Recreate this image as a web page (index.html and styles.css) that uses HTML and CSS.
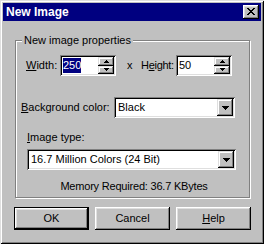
FILE: index.html
```html
<!DOCTYPE html>
<html lang="en">
<head>
    <meta charset="UTF-8">
    <title>New Image</title>
    <link rel="stylesheet" href="styles.css">
</head>
<body>
    <div class="dialog">
        <div class="title-bar">
            <span class="title">New Image</span>
            <button class="close-btn" aria-label="Close">
                <svg width="8" height="7" viewBox="0 0 8 7" shape-rendering="crispEdges"><path d="M0 0h2v1H0zM6 0h2v1H6zM1 1h2v1H1zM5 1h2v1H5zM2 2h4v1H2zM3 3h2v1H3zM2 4h4v1H2zM1 5h2v1H1zM5 5h2v1H5zM0 6h2v1H0zM6 6h2v1H6z" fill="#000"/></svg>
            </button>
        </div>

        <fieldset class="group">
            <legend>New image properties</legend>

            <div class="size-row">
                <label class="lbl-width"><u>W</u>idth:</label>
                <div class="spin-edit">
                    <span class="edit-text"><span class="selected">250</span></span>
                    <div class="spin">
                        <span class="spin-btn"><svg width="5" height="3" viewBox="0 0 5 3" shape-rendering="crispEdges"><path d="M2 0h1v1H2zM1 1h3v1H1zM0 2h5v1H0z"/></svg></span>
                        <span class="spin-btn"><svg width="5" height="3" viewBox="0 0 5 3" shape-rendering="crispEdges"><path d="M0 0h5v1H0zM1 1h3v1H1zM2 2h1v1H2z"/></svg></span>
                    </div>
                </div>
                <span class="times">x</span>
                <label class="lbl-height">H<u>e</u>ight:</label>
                <div class="spin-edit">
                    <span class="edit-text">50</span>
                    <div class="spin">
                        <span class="spin-btn"><svg width="5" height="3" viewBox="0 0 5 3" shape-rendering="crispEdges"><path d="M2 0h1v1H2zM1 1h3v1H1zM0 2h5v1H0z"/></svg></span>
                        <span class="spin-btn"><svg width="5" height="3" viewBox="0 0 5 3" shape-rendering="crispEdges"><path d="M0 0h5v1H0zM1 1h3v1H1zM2 2h1v1H2z"/></svg></span>
                    </div>
                </div>
            </div>

            <div class="bg-row">
                <label class="lbl-bg"><u>B</u>ackground color:</label>
                <div class="combo combo-bg">
                    <span class="combo-text">Black</span>
                    <span class="drop-btn"><svg width="7" height="4" viewBox="0 0 7 4" shape-rendering="crispEdges"><path d="M0 0h7v1H0zM1 1h5v1H1zM2 2h3v1H2zM3 3h1v1H3z"/></svg></span>
                </div>
            </div>

            <label class="lbl-type"><u>I</u>mage type:</label>
            <div class="combo combo-type">
                <span class="combo-text">16.7 Million Colors (24 Bit)</span>
                <span class="drop-btn"><svg width="7" height="4" viewBox="0 0 7 4" shape-rendering="crispEdges"><path d="M0 0h7v1H0zM1 1h5v1H1zM2 2h3v1H2zM3 3h1v1H3z"/></svg></span>
            </div>

            <p class="memory">Memory Required: 36.7 KBytes</p>
        </fieldset>

        <div class="buttons">
            <button class="btn btn-default">OK</button>
            <button class="btn">Cancel</button>
            <button class="btn"><u>H</u>elp</button>
        </div>
    </div>
</body>
</html>
```

FILE: styles.css
```css
:root {
    --face: #c0c0c0;
    --light: #dfdfdf;
    --shadow: #808080;
    --navy: #000080;
}

* {
    margin: 0;
    padding: 0;
    box-sizing: border-box;
}

body {
    background: var(--face);
    color: #000;
    font-family: "Liberation Sans", Arial, sans-serif;
    font-size: 11px;
    line-height: 13px;
}

u {
    text-decoration: underline;
    text-underline-offset: 1px;
}

/* Window frame */
.dialog {
    width: 264px;
    height: 244px;
    padding: 3px;
    background: var(--face);
    box-shadow: inset 1px 1px var(--light), inset -1px -1px #000,
                inset 2px 2px #fff, inset -2px -2px var(--shadow);
}

.title-bar {
    height: 18px;
    background: var(--navy);
    display: flex;
    justify-content: space-between;
    align-items: flex-start;
    padding: 0 2px 0 3px;
}

.title {
    color: #fff;
    font-weight: bold;
    font-size: 12px;
    line-height: 18px;
}

.close-btn {
    width: 16px;
    height: 14px;
    margin-top: 2px;
    border: none;
    background: var(--face);
    box-shadow: inset -1px -1px #000, inset 1px 1px #fff,
                inset -2px -2px var(--shadow), inset 2px 2px var(--light);
    display: flex;
    align-items: flex-start;
    padding: 3px 0 0 4px;
}

.close-btn svg {
    display: block;
}

/* Group box */
.group {
    margin: 13px 0 0 12px;
    width: 235px;
    padding: 0 0 4px;
    border: 1px solid var(--shadow);
    box-shadow: 1px 1px #fff, inset 1px 1px #fff;
    min-inline-size: 0;
}

.group legend {
    margin-left: 6px;
    padding: 0 2px;
    background: var(--face);
    line-height: 13px;
}

/* Sunken fields */
.spin-edit,
.combo {
    height: 21px;
    background: #fff;
    padding: 2px;
    display: flex;
    box-shadow: inset 1px 1px var(--shadow), inset -1px -1px #fff,
                inset 2px 2px #000, inset -2px -2px var(--light);
}

.spin-edit {
    width: 56px;
}

.edit-text {
    flex: 1;
    padding-left: 1px;
    line-height: 17px;
    display: flex;
    align-items: center;
}

.selected {
    background: var(--navy);
    color: #fff;
    line-height: 15px;
}

.spin {
    width: 16px;
    display: flex;
    flex-direction: column;
}

.spin-btn,
.drop-btn {
    background: var(--face);
    display: flex;
    align-items: center;
    justify-content: center;
    box-shadow: inset -1px -1px #000, inset 1px 1px var(--light),
                inset -2px -2px var(--shadow), inset 2px 2px #fff;
}

.spin-btn {
    flex: 1;
}

.drop-btn {
    width: 16px;
    height: 17px;
}

.combo-text {
    flex: 1;
    padding-left: 2px;
    line-height: 17px;
}

/* Rows */
.size-row {
    display: flex;
    align-items: center;
    margin-top: 8px;
    padding-left: 10px;
}

.lbl-width {
    width: 34px;
}

.times {
    margin-left: 11px;
    width: 14px;
}

.lbl-height {
    width: 35px;
    letter-spacing: -0.3px;
}

.bg-row {
    display: flex;
    align-items: center;
    margin-top: 21px;
    padding-left: 5px;
}

.lbl-bg {
    width: 93px;
}

.combo-bg {
    width: 121px;
}

.lbl-type {
    display: block;
    margin: 13px 0 0 11px;
}

.combo-type {
    width: 209px;
    margin: 5px 0 0 11px;
}

.memory {
    margin-top: 10px;
    text-align: center;
    padding-left: 3px;
    letter-spacing: -0.2px;
}

/* Buttons */
.buttons {
    display: flex;
    gap: 6px;
    margin: 9px 0 0 11px;
}

.btn {
    width: 75px;
    height: 23px;
    border: none;
    background: var(--face);
    font: inherit;
    color: #000;
    box-shadow: inset -1px -1px #000, inset 1px 1px #fff,
                inset -2px -2px var(--shadow), inset 2px 2px var(--light);
}

.btn-default {
    box-shadow: inset 0 0 0 1px #000, inset -2px -2px #000, inset 2px 2px #fff,
                inset -3px -3px var(--shadow), inset 3px 3px var(--light);
}
```
